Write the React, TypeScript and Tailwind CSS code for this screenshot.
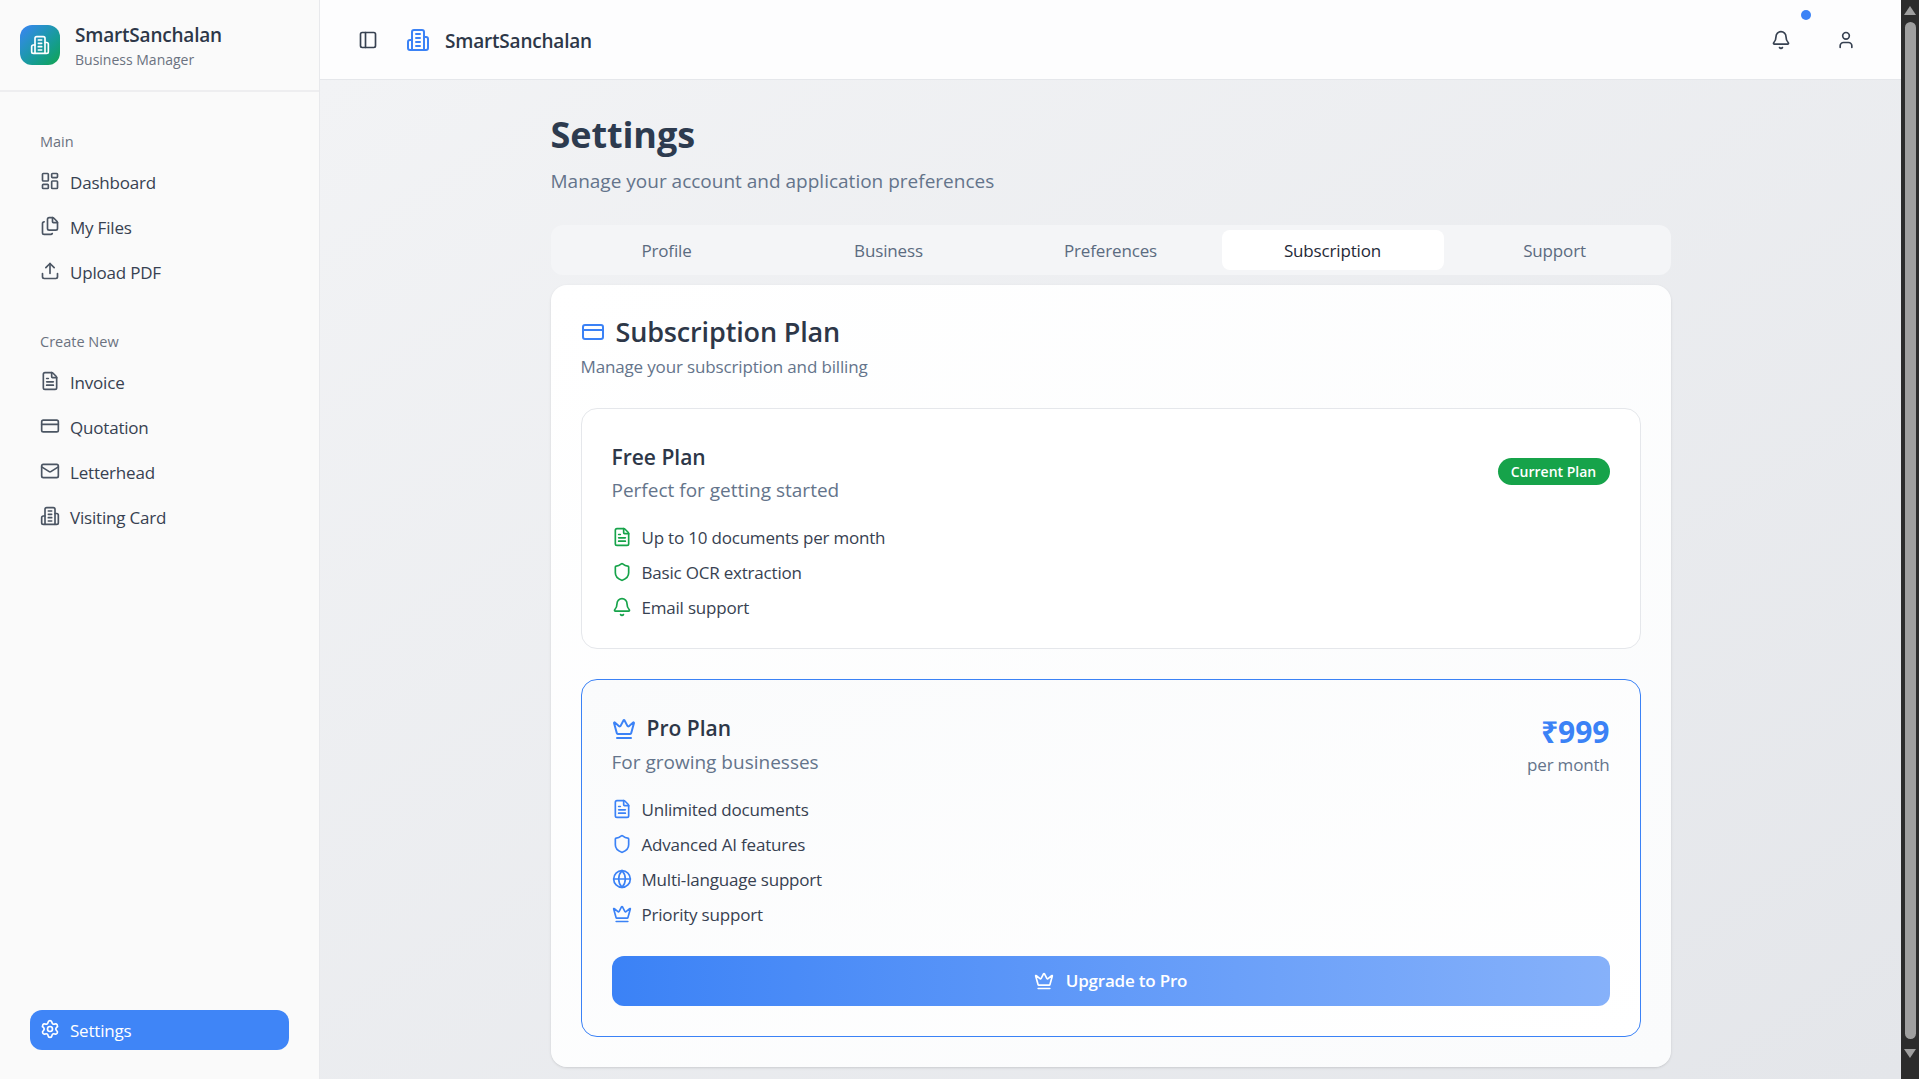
import {
  Bell,
  CreditCard,
  Crown,
  FileText,
  Files,
  Globe,
  LayoutDashboard,
  Mail,
  PanelLeft,
  Settings,
  Shield,
  Upload,
  User,
} from "lucide-react";
import React from "react";

const Building = ({ className }: { className?: string }) => (
  <svg
    viewBox="0 0 24 24"
    fill="none"
    stroke="currentColor"
    strokeWidth="2"
    strokeLinecap="round"
    strokeLinejoin="round"
    className={className}
  >
    <path d="M6 22V4a2 2 0 0 1 2-2h8a2 2 0 0 1 2 2v18Z" />
    <path d="M6 12H4a2 2 0 0 0-2 2v6a2 2 0 0 0 2 2h2" />
    <path d="M18 9h2a2 2 0 0 1 2 2v9a2 2 0 0 1-2 2h-2" />
    <path d="M10 6h4" />
    <path d="M10 10h4" />
    <path d="M10 14h4" />
    <path d="M10 18h4" />
  </svg>
);

const mainNav = [
  { label: "Dashboard", icon: LayoutDashboard },
  { label: "My Files", icon: Files },
  { label: "Upload PDF", icon: Upload },
];

const createNav = [
  { label: "Invoice", icon: FileText },
  { label: "Quotation", icon: CreditCard },
  { label: "Letterhead", icon: Mail },
  { label: "Visiting Card", icon: Building },
];

const tabs = ["Profile", "Business", "Preferences", "Subscription", "Support"];

const freeFeatures = [
  { label: "Up to 10 documents per month", icon: FileText },
  { label: "Basic OCR extraction", icon: Shield },
  { label: "Email support", icon: Bell },
];

const proFeatures = [
  { label: "Unlimited documents", icon: FileText },
  { label: "Advanced AI features", icon: Shield },
  { label: "Multi-language support", icon: Globe },
  { label: "Priority support", icon: Crown },
];

const NavRow = ({ item }: { item: { label: string; icon: any } }) => {
  const Icon = item.icon;
  return (
    <div className="flex items-center gap-[10px] h-10 px-[10px] text-[#374151] text-[17px] tracking-[-0.2px]">
      <Icon className="w-5 h-5 -mt-[2px] text-[#4b5563]" strokeWidth={2} />
      <span className="pt-[1px]">{item.label}</span>
    </div>
  );
};

const FeatureList = ({
  items,
  color,
}: {
  items: { label: string; icon: any }[];
  color: string;
}) => (
  <div className="flex flex-col gap-[11px] mt-[21px]">
    {items.map((item, index) => {
      const Icon = item.icon;
      return (
        <div key={index} className="flex items-center gap-[10px] h-6 text-[17px] tracking-[-0.2px] text-[#374151]">
          <Icon className={`w-5 h-5 -mt-[2px] ${color}`} strokeWidth={2} />
          <span>{item.label}</span>
        </div>
      );
    })}
  </div>
);

const App = () => {
  return (
    <div className="flex h-screen overflow-hidden bg-[#e9eaee] font-['Open_Sans','Noto_Sans',sans-serif]">
      <aside className="flex flex-col w-[320px] shrink-0 bg-[#fafafa] border-r border-[#e8e9ec]">
        <div className="flex items-center gap-[15px] h-[92px] pl-5 border-b-2 border-[#eeeef0]">
          <div className="flex items-center justify-center w-10 h-10 rounded-xl bg-gradient-to-br from-[#3b82f6] to-[#16a34a]">
            <Building className="w-5 h-5 text-white" />
          </div>
          <div className="flex flex-col pt-[2px]">
            <span className="text-[19px] leading-[26px] font-semibold tracking-[-0.2px] text-[#2d3748]">SmartSanchalan</span>
            <span className="mt-[2px] text-[14px] leading-[20px] text-[#6b7280]">Business Manager</span>
          </div>
        </div>

        <nav className="flex flex-col flex-1 px-[30px] pt-[38px] pb-[29px]">
          <div className="h-6 leading-6 pl-[10px] mb-2 text-[14.5px] font-medium text-[#6b7280]">Main</div>
          <div className="flex flex-col gap-[5px]">
            {mainNav.map((item, index) => (
              <NavRow key={index} item={item} />
            ))}
          </div>
          <div className="h-6 leading-6 pl-[10px] mt-[38px] mb-2 text-[14.5px] font-medium text-[#6b7280]">
            Create New
          </div>
          <div className="flex flex-col gap-[5px]">
            {createNav.map((item, index) => (
              <NavRow key={index} item={item} />
            ))}
          </div>
          <div className="mt-auto flex items-center gap-[10px] h-10 px-[10px] rounded-xl bg-[#3f85f7] text-white text-[17px] tracking-[-0.2px]">
            <Settings className="w-5 h-5 -mt-[2px]" strokeWidth={2} />
            <span className="pt-[1px]">Settings</span>
          </div>
        </nav>
      </aside>

      <div className="flex flex-col flex-1 min-w-0">
        <header className="flex items-center shrink-0 h-[80px] pl-[38px] pr-[45px] bg-[#fdfdfe] border-b border-[#e5e7eb]">
          <PanelLeft className="w-5 h-5 text-[#374151]" strokeWidth={2} />
          <Building className="w-6 h-6 ml-7 text-[#3b82f6]" />
          <span className="ml-[15px] pt-[3px] text-[19px] font-semibold tracking-[-0.2px] text-[#2d3748]">SmartSanchalan</span>
          <div className="relative ml-auto">
            <Bell className="w-5 h-5 text-[#374151]" strokeWidth={2} />
            <span className="absolute -top-[20px] left-[30px] w-[10px] h-[10px] rounded-full bg-[#3b82f6]"></span>
          </div>
          <User className="w-5 h-5 ml-[45px] text-[#374151]" strokeWidth={2} />
        </header>

        <main className="flex-1 min-h-0 overflow-hidden bg-gradient-to-br from-[#f2f3f5] to-[#e4e6ea]">
          <div className="w-[1120px] mx-auto pt-[30px]">
            <h1 className="text-[36px] leading-[50px] font-bold tracking-[-0.1px] text-[#2d3b4f]">Settings</h1>
            <p className="mt-[7px] text-[19px] leading-7 text-[#64748b]">
              Manage your account and application preferences
            </p>

            <div className="grid grid-cols-5 mt-[30px] p-[5px] h-[50px] rounded-xl bg-[#f4f5f7]">
              {tabs.map((tab, index) => (
                <div
                  key={index}
                  className={`flex items-center justify-center pt-[2px] rounded-lg text-[17px] font-medium tracking-[-0.15px] ${
                    tab === "Subscription" ? "bg-white text-[#1f2937]" : "text-[#5b6b80]"
                  }`}
                >
                  {tab}
                </div>
              ))}
            </div>

            <section className="mt-[10px] px-[30px] pt-[29px] pb-[30px] rounded-2xl bg-gradient-to-br from-white to-[#fafbfc] shadow-sm">
              <div className="flex items-center gap-[11px] h-[36px]">
                <CreditCard className="w-6 h-6 text-[#3b82f6]" strokeWidth={2} />
                <h2 className="text-[27px] font-semibold tracking-[-0.15px] text-[#2d3748]">Subscription Plan</h2>
              </div>
              <p className="mt-[5px] text-[17px] leading-6 tracking-[-0.15px] text-[#64748b]">
                Manage your subscription and billing
              </p>

              <div className="relative mt-[29px] h-[241px] px-[30px] pt-[30px] rounded-2xl border border-[#e5e7eb] bg-white">
                <h3 className="text-[21px] leading-[36px] font-semibold text-[#2d3748]">Free Plan</h3>
                <p className="text-[19px] leading-[30px] text-[#64748b]">Perfect for getting started</p>
                <FeatureList items={freeFeatures} color="text-[#16a34a]" />
                <span className="absolute right-[30px] top-[49px] flex items-center justify-center w-[112px] h-[27px] rounded-full bg-[#16a34a] text-white text-[14px] font-semibold">
                  Current Plan
                </span>
              </div>

              <div className="relative mt-[30px] h-[358px] px-[30px] pt-[31px] rounded-2xl border border-[#3b82f6] bg-gradient-to-br from-[#fafbfc] to-white">
                <div className="flex items-center gap-[11px] h-[36px]">
                  <Crown className="w-6 h-6 text-[#3b82f6]" strokeWidth={2} />
                  <h3 className="text-[21px] font-semibold text-[#2d3748]">Pro Plan</h3>
                </div>
                <p className="text-[19px] leading-[30px] text-[#64748b]">For growing businesses</p>
                <FeatureList items={proFeatures} color="text-[#3b82f6]" />
                <div className="absolute right-[30px] top-[32px] text-right">
                  <div className="text-[30px] leading-[40px] font-bold text-[#3b82f6]">₹999</div>
                  <div className="mt-[1px] text-[17px] leading-6 tracking-[-0.2px] text-[#64748b]">per month</div>
                </div>
                <button className="flex items-center justify-center gap-3 w-full h-[50px] mt-[29px] rounded-xl bg-gradient-to-r from-[#3b82f6] to-[#86b1fa] text-white text-[17px] font-semibold tracking-[-0.2px]">
                  <Crown className="w-5 h-5" strokeWidth={2} />
                  Upgrade to Pro
                </button>
              </div>
            </section>
          </div>
        </main>
      </div>

      <div className="flex flex-col items-center shrink-0 w-[18px] bg-[#2c2c2c]">
        <div className="mt-[6px] w-0 h-0 border-x-[6px] border-x-transparent border-b-[9px] border-b-[#9f9f9f]"></div>
        <div className="mt-[7px] w-[11px] h-[1017px] rounded-full bg-[#9f9f9f]"></div>
        <div className="mt-[10px] w-0 h-0 border-x-[6px] border-x-transparent border-t-[9px] border-t-[#9f9f9f]"></div>
      </div>
    </div>
  );
};

export default App;
